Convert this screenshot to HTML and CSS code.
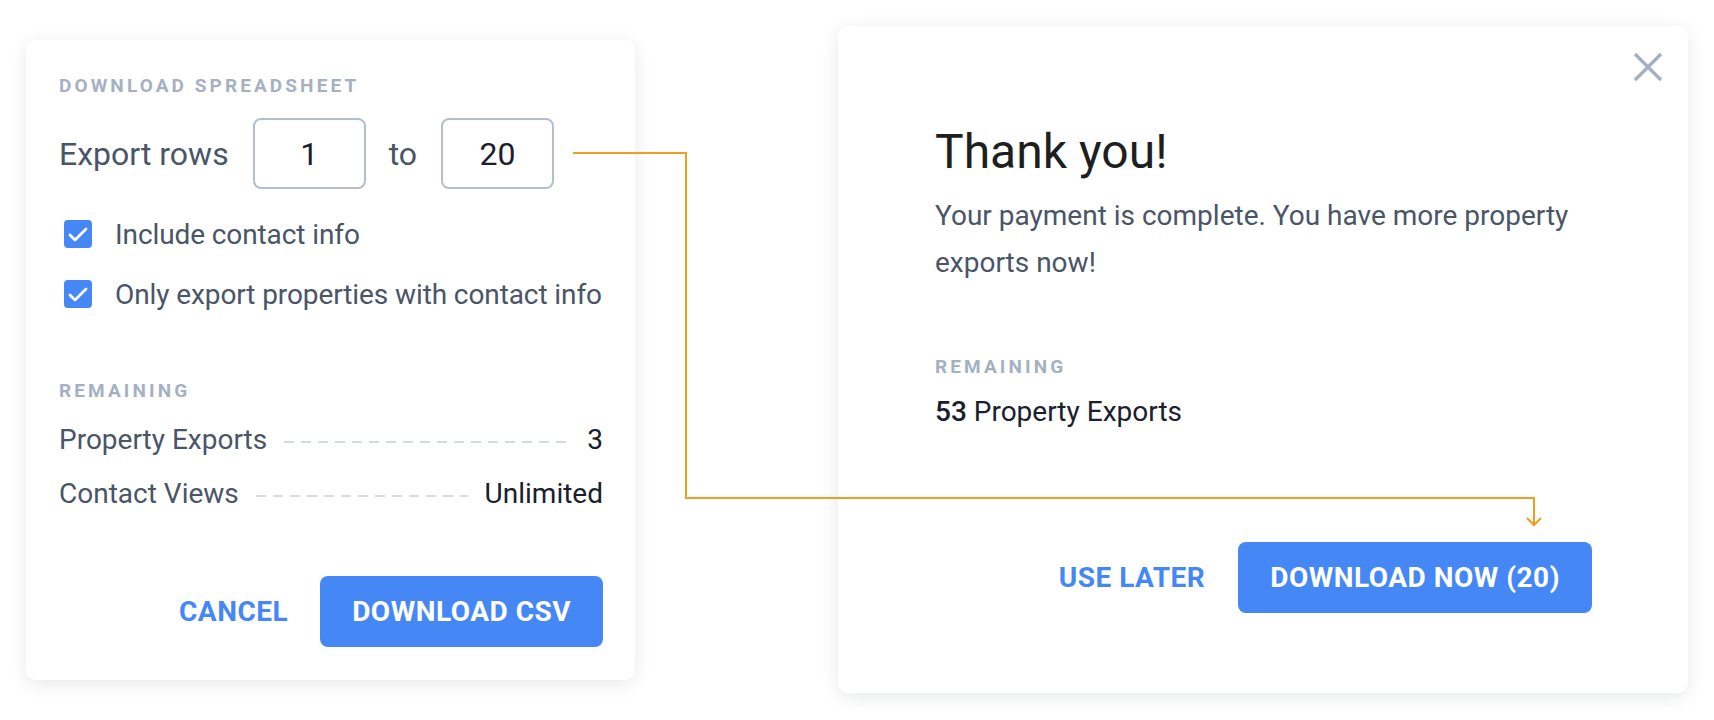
FILE: index.html
```html
<!DOCTYPE html>
<html lang="en">
<head>
    <meta charset="UTF-8">
    <meta name="viewport" content="width=device-width, initial-scale=1.0">
    <title>Download Spreadsheet</title>
    <link rel="stylesheet" href="styles.css">
</head>
<body>
    <div class="page">
        <section class="card export-card">
            <div class="eyebrow">Download spreadsheet</div>
            <div class="range-row">
                <span class="range-label">Export rows</span>
                <input class="range-input" type="text" value="1">
                <span class="range-label">to</span>
                <input class="range-input" type="text" value="20">
            </div>
            <div class="checks">
                <label class="check">
                    <span class="box"><svg width="20" height="15" viewBox="0 0 20 15"><path d="M2 8 L7 13 L18 2" fill="none" stroke="#fff" stroke-width="2.8" stroke-linecap="round" stroke-linejoin="round"/></svg></span>
                    Include contact info
                </label>
                <label class="check">
                    <span class="box"><svg width="20" height="15" viewBox="0 0 20 15"><path d="M2 8 L7 13 L18 2" fill="none" stroke="#fff" stroke-width="2.8" stroke-linecap="round" stroke-linejoin="round"/></svg></span>
                    Only export properties with contact info
                </label>
            </div>
            <div class="eyebrow remaining">Remaining</div>
            <div class="stats">
                <div class="stat">
                    <span>Property Exports</span>
                    <span class="dashes"></span>
                    <span class="stat-value">3</span>
                </div>
                <div class="stat">
                    <span>Contact Views</span>
                    <span class="dashes"></span>
                    <span class="stat-value">Unlimited</span>
                </div>
            </div>
            <div class="actions">
                <button class="btn-text">Cancel</button>
                <button class="btn-primary">Download CSV</button>
            </div>
        </section>

        <section class="card thanks-card">
            <button class="close" aria-label="Close">
                <svg width="30" height="30" viewBox="0 0 30 30"><path d="M2 2 L28 28 M28 2 L2 28" stroke="#a3b0c3" stroke-width="3.4"/></svg>
            </button>
            <h1>Thank you!</h1>
            <p class="lead">Your payment is complete. You have more property exports now!</p>
            <div class="eyebrow remaining-right">Remaining</div>
            <div class="total"><span class="num">53</span> Property Exports</div>
            <div class="actions actions-right">
                <button class="btn-text">Use later</button>
                <button class="btn-primary">Download now (20)</button>
            </div>
        </section>

        <!-- flow arrow between the two dialogs -->
        <svg class="connector" width="1714" height="720" viewBox="0 0 1714 720">
            <path d="M573 153 H686 V498 H1534 V525" fill="none" stroke="#f29d1f" stroke-width="2"/>
            <path d="M1527 518 L1534 525 L1541 518" fill="none" stroke="#f29d1f" stroke-width="2"/>
        </svg>
    </div>
</body>
</html>
```

FILE: styles.css
```css
body {
    margin: 0;
    font-family: Roboto, "Liberation Sans", Arial, sans-serif;
    background-color: #fff;
    color: #4a5568;
}
.page {
    position: relative;
    display: flex;
    align-items: flex-start;
    gap: 203px;
    padding: 26px 0 0 26px;
    height: 694px;
}
.card {
    background-color: #fff;
    border-radius: 10px;
    box-shadow: 0 4px 18px rgba(30, 40, 60, 0.10);
    box-sizing: border-box;
}
.export-card {
    width: 609px;
    margin-top: 14px;
    padding: 33px 32px 33px 33px;
}
.eyebrow {
    font-size: 19px;
    line-height: 25px;
    font-weight: 700;
    letter-spacing: 3.1px;
    text-transform: uppercase;
    color: #a5b1c2;
}
.range-row {
    display: flex;
    align-items: center;
    margin-top: 20px;
}
.range-label {
    font-size: 32px;
    margin-right: 24px;
}
.range-input {
    width: 113px;
    height: 71px;
    box-sizing: border-box;
    border: 2px solid #b3bfce;
    border-radius: 8px;
    margin-right: 23px;
    font-family: inherit;
    font-size: 32px;
    text-align: center;
    color: #1a202c;
    outline: none;
}
.checks {
    margin-top: 15px;
}
.check {
    display: flex;
    align-items: center;
    height: 60px;
    padding-left: 5px;
    font-size: 28px;
    letter-spacing: -0.1px;
    white-space: nowrap;
}
.box {
    display: flex;
    align-items: center;
    justify-content: center;
    flex-shrink: 0;
    width: 28px;
    height: 28px;
    margin-right: 23px;
    border-radius: 4px;
    background-color: #4487f5;
}
.remaining {
    margin-top: 54px;
}
.stats {
    display: flex;
    flex-direction: column;
    gap: 12px;
    margin-top: 16px;
}
.stat {
    display: flex;
    align-items: center;
    font-size: 28px;
    line-height: 42px;
}
.dashes {
    flex: 1;
    height: 2px;
    margin: 4px 17px 0;
    background-image: linear-gradient(to right, #d3dbe5 60%, transparent 60%);
    background-size: 17px 2px;
    background-repeat: repeat-x;
}
.stat-value {
    color: #1a202c;
}
.actions {
    display: flex;
    justify-content: flex-end;
    align-items: center;
    gap: 32px;
    margin-top: 61px;
}
button {
    font-family: inherit;
    font-size: 28px;
    font-weight: 700;
    letter-spacing: 0.5px;
    text-transform: uppercase;
    border: none;
    cursor: pointer;
}
.btn-text {
    background: none;
    color: #4487f5;
    padding: 0;
}
.btn-primary {
    height: 71px;
    padding: 0 32px;
    border-radius: 8px;
    background-color: #4487f5;
    color: #fff;
}
.thanks-card {
    position: relative;
    width: 850px;
    padding: 96px 96px 80px 97px;
}
.close {
    position: absolute;
    top: 26px;
    right: 25px;
    padding: 0;
    background: none;
    line-height: 0;
}
h1 {
    margin: 0;
    font-size: 48px;
    line-height: 60px;
    font-weight: 400;
    color: #1f1f1f;
}
.lead {
    margin: 10px 0 0;
    font-size: 28px;
    line-height: 47px;
}
.remaining-right {
    margin-top: 68px;
}
.total {
    margin-top: 12px;
    font-size: 28px;
    line-height: 42px;
    color: #1a202c;
}
.num {
    font-weight: 500;
}
.actions-right {
    margin-top: 109px;
    gap: 33px;
}
.connector {
    position: absolute;
    top: 0;
    left: 0;
    pointer-events: none;
}
```
